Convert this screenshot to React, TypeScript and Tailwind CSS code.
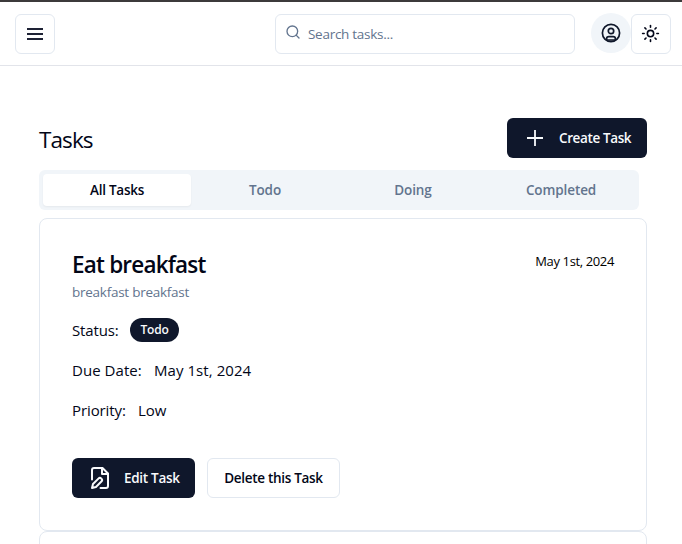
import { Search, Sun } from "lucide-react";

const tabs = ["All Tasks", "Todo", "Doing", "Completed"];

function MenuIcon() {
  return (
    <svg width="16" height="12" viewBox="0 0 16 12" fill="#1e2235">
      <path d="M0 0h16v2H0zM0 5h16v2H0zM0 10h16v2H0z" />
    </svg>
  );
}

function AccountIcon() {
  return (
    <svg width="20" height="20" viewBox="0 0 20 20" fill="none" stroke="#0f172a" strokeWidth="1.7">
      <circle cx="10" cy="10" r="8.6" />
      <circle cx="10" cy="8" r="2.7" />
      <path d="M5.6 17v-1.2c0-1.5 1-2.2 2.3-2.2h4.2c1.3 0 2.3.7 2.3 2.2V17z" strokeLinejoin="round" />
    </svg>
  );
}

function PlusIcon() {
  return (
    <svg width="24" height="24" viewBox="0 0 24 24" fill="none" stroke="currentColor" strokeWidth="1.8">
      <path d="M12 4v16M4 12h16" />
    </svg>
  );
}

function FileEditIcon() {
  return (
    <svg width="24" height="24" viewBox="0 0 24 24" fill="none" stroke="currentColor" strokeWidth="2" strokeLinecap="round" strokeLinejoin="round">
      <path d="M4 13.5V4a2 2 0 0 1 2-2h8.5L20 7.5V20a2 2 0 0 1-2 2h-5.5" />
      <path d="M14 2v6h6" />
      <path d="M10.42 12.61a2.1 2.1 0 1 1 2.97 2.97L7.95 21 4 22l.99-3.95 5.43-5.44Z" />
    </svg>
  );
}

function Header() {
  return (
    <header className="flex h-[66px] items-start border-t-2 border-b border-t-[#3c3a3b] border-b-[#e2e4ea] pt-3 pr-[11px] pl-[15px]">
      <button className="flex size-10 items-center justify-center rounded-md border border-slate-200">
        <MenuIcon />
      </button>
      <div className="ml-auto flex h-10 w-[300px] items-center rounded-md border border-slate-200 pl-[9px]">
        <Search className="mb-1 size-4 text-slate-500" />
        <input
          placeholder="Search tasks..."
          className="ml-[7px] w-60 text-[13.5px] tracking-[-0.28px] outline-none placeholder:text-slate-500"
        />
      </div>
      <button className="-mt-px ml-4 flex size-10 items-center justify-center rounded-full bg-slate-100">
        <AccountIcon />
      </button>
      <button className="flex size-10 items-center justify-center rounded-md border border-slate-200 pr-px pb-px">
        <Sun className="size-[19px] text-slate-950" />
      </button>
    </header>
  );
}

function TaskCard() {
  return (
    <article className="h-[313px] rounded-lg border border-slate-200 px-8 pt-[30px]">
      <div className="flex items-start justify-between">
        <h2 className="text-[22.5px] leading-8 font-semibold tracking-[-0.8px]">Eat breakfast</h2>
        <span className="pt-[2px] text-[13px] leading-5 tracking-[-0.37px] text-black">May 1st, 2024</span>
      </div>
      <p className="mt-px text-[13.5px] leading-5 tracking-[-0.26px] text-slate-500">breakfast breakfast</p>
      <div className="mt-4 flex h-6 items-center">
        <span className="w-[58px] text-[15px] tracking-[-0.15px]">Status:</span>
        <span className="flex h-6 w-[49px] items-center justify-center rounded-full bg-slate-900 text-xs font-semibold tracking-[-0.2px] text-slate-50">Todo</span>
      </div>
      <div className="mt-4 flex h-6 items-center text-[15px]">
        <span className="w-[82px] tracking-[0.05px]">Due Date:</span>
        <span className="tracking-[0.06px]">May 1st, 2024</span>
      </div>
      <div className="mt-4 flex h-6 items-center text-[15px]">
        <span className="w-[66px] tracking-[-0.1px]">Priority:</span>
        <span>Low</span>
      </div>
      <div className="mt-9 flex gap-3">
        <button className="flex h-10 w-[123px] items-center gap-3 rounded-md bg-slate-900 pl-4 text-[13.5px] font-semibold tracking-[-0.3px] whitespace-nowrap text-slate-50">
          <FileEditIcon />
          Edit Task
        </button>
        <button className="h-10 w-[133px] rounded-md border border-slate-200 text-[13.5px] font-semibold tracking-[-0.3px] whitespace-nowrap">
          Delete this Task
        </button>
      </div>
    </article>
  );
}

export default function App() {
  return (
    <div className="h-[544px] overflow-hidden bg-white font-['Open_Sans','Noto_Sans',sans-serif] text-[#020617]">
      <Header />
      <main className="pt-[52px] pr-[35px] pl-[39px]">
        <div className="flex h-10 items-center justify-between">
          <h1 className="pt-[3px] text-[22.5px] leading-8 tracking-[-0.9px]">Tasks</h1>
          <button className="flex h-10 w-[140px] items-center gap-3 rounded-md bg-slate-900 pl-4 text-[13.5px] font-semibold tracking-[-0.38px] whitespace-nowrap text-slate-50">
            <PlusIcon />
            Create Task
          </button>
        </div>
        <nav className="mt-3 grid h-10 w-[600px] grid-cols-4 rounded-md bg-slate-100 p-1 text-[13.5px] font-semibold tracking-[-0.1px] text-slate-500">
          {tabs.map((tab, i) => (
            <button
              key={tab}
              className={i === 0 ? "rounded-sm bg-white tracking-[-0.25px] text-slate-950 shadow-xs" : "rounded-sm"}
            >
              {tab}
            </button>
          ))}
        </nav>
        <section className="mt-2">
          <TaskCard />
          <article className="h-[313px] rounded-lg border border-slate-200" />
        </section>
      </main>
    </div>
  );
}
